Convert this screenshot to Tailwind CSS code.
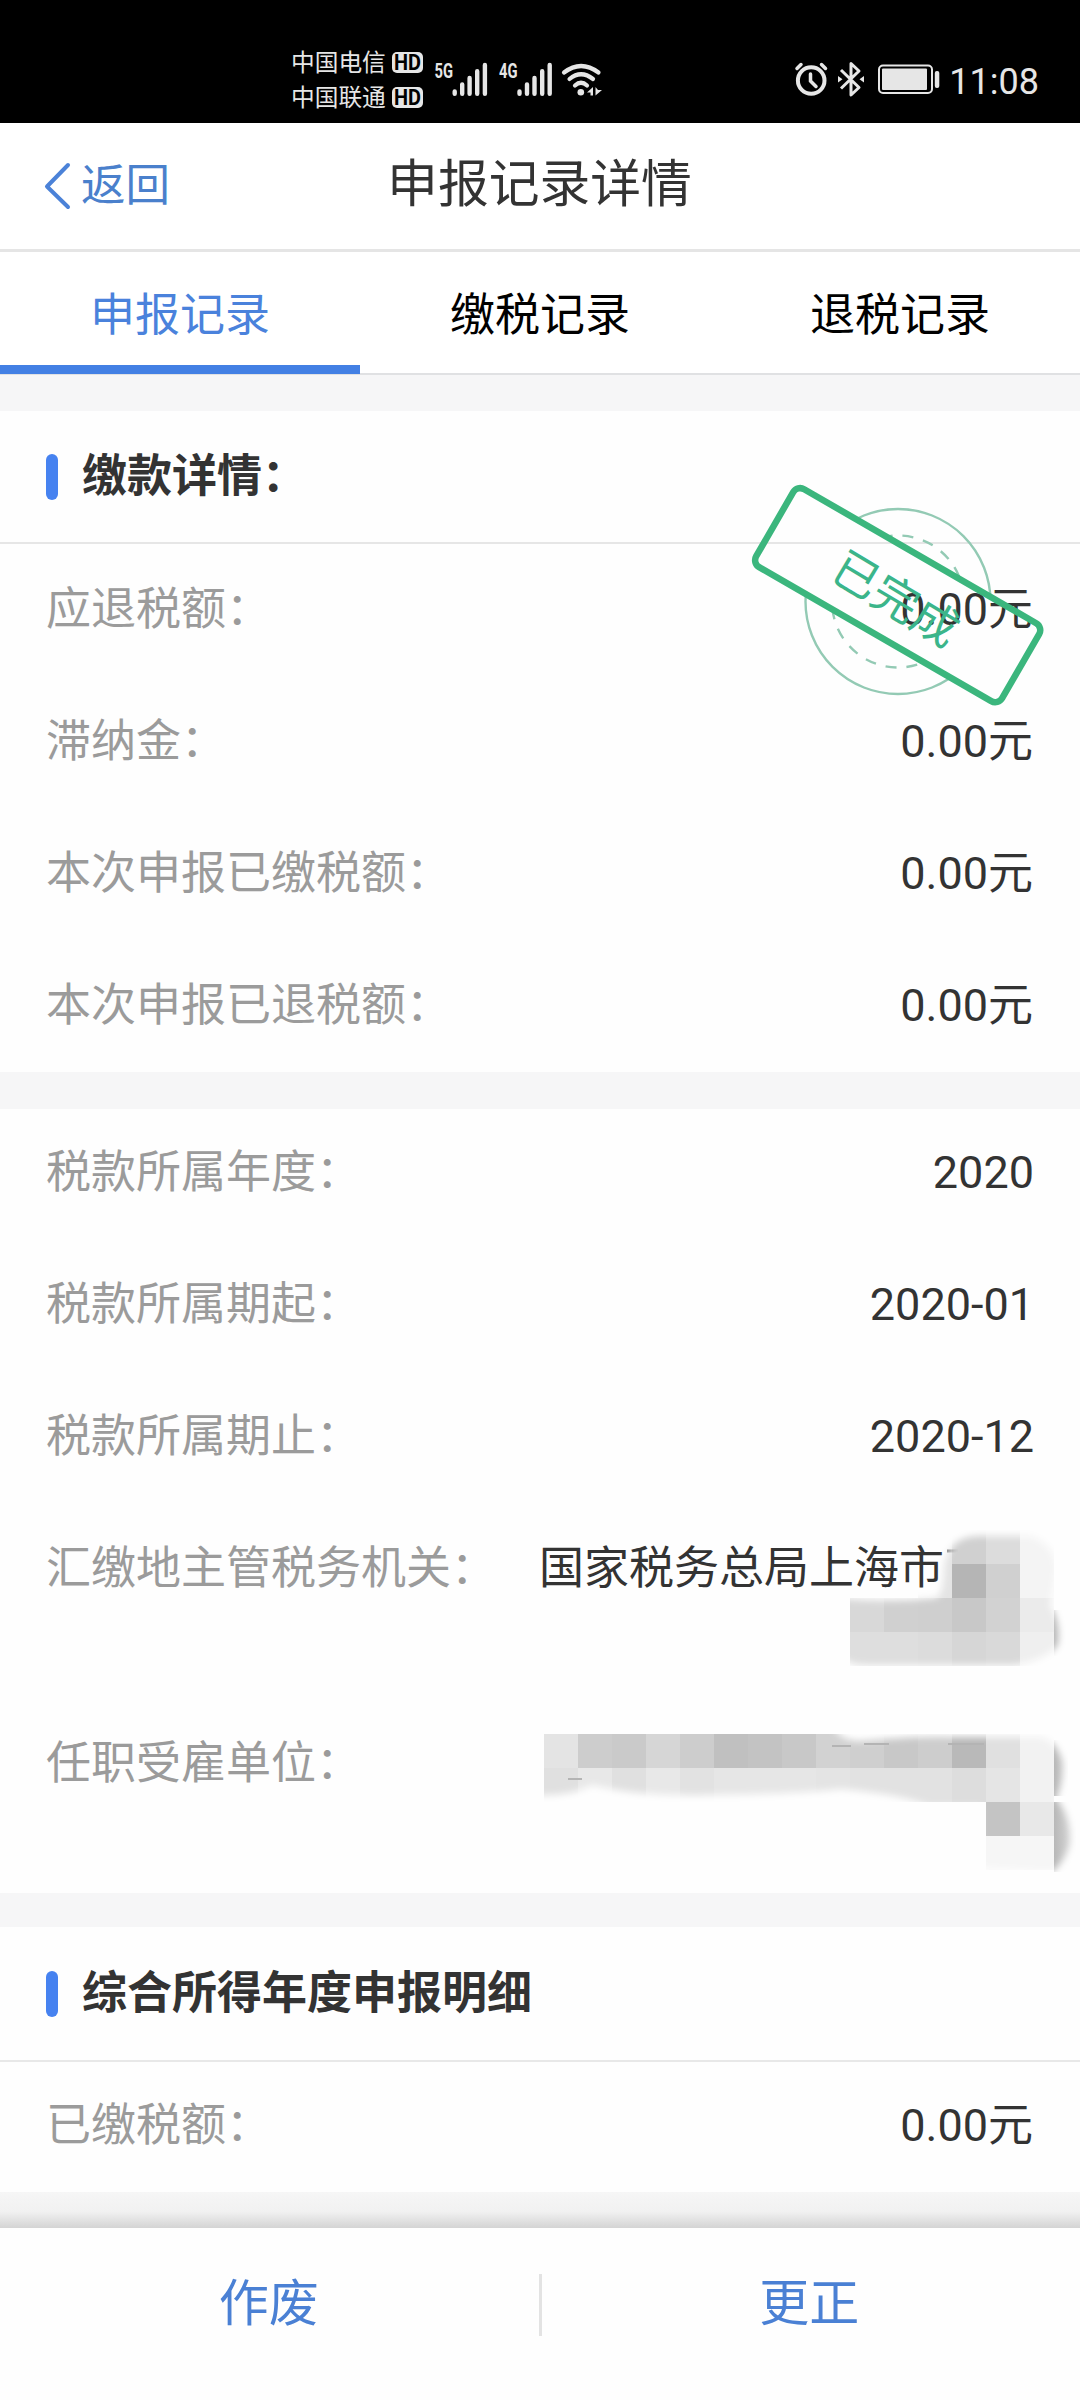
<!DOCTYPE html>
<html lang="zh-CN">
<head>
<meta charset="utf-8">
<title>申报记录详情</title>
<script src="https://cdn.jsdelivr.net/npm/@tailwindcss/browser@4"></script>
</head>
<body class="bg-[#f6f6f7]">
<div class="relative flex h-[2400px] w-[1080px] flex-col overflow-hidden font-[Roboto,'Noto_Sans_CJK_SC',sans-serif] text-[45px] leading-[60px] text-[#333]">

  <!-- status bar -->
  <header class="flex h-[123px] shrink-0 bg-black text-[#e6e6e6]">
    <div class="ml-[291px] mt-[46px] flex w-[101px] flex-col text-[23.7px] leading-[35px] whitespace-nowrap">
      <span>中国电信</span>
      <span>中国联通</span>
    </div>
    <svg class="h-[123px] w-[220px]" viewBox="392 0 220 123" fill="#e6e6e6">
      <rect x="392" y="52" width="31" height="21" rx="5"/>
      <rect x="392" y="87" width="31" height="21" rx="5"/>
      <g fill="#000" font-family="Roboto" font-weight="700" font-size="21.500">
        <text x="394" y="70.300" textLength="27" lengthAdjust="spacingAndGlyphs">HD</text>
        <text x="394" y="105.300" textLength="27" lengthAdjust="spacingAndGlyphs">HD</text>
      </g>
      <g font-family="Roboto" font-weight="700" font-size="20">
        <text x="434.500" y="77.500" textLength="18.500" lengthAdjust="spacingAndGlyphs">5G</text>
        <text x="499" y="77.500" textLength="18.500" lengthAdjust="spacingAndGlyphs">4G</text>
      </g>
      <g stroke="#e6e6e6" stroke-width="4.400" stroke-linecap="round">
        <path d="M454.700 91.500v2.300M462.200 84.500v9.300M469.600 78v15.800M477.200 71.200v22.600M484.900 65v28.800"/>
        <path d="M519.500 91.500v2.300M527 84.500v9.300M534.500 78v15.800M542.200 71.200v22.600M549.700 65v28.800"/>
      </g>
      <g fill="none" stroke="#e6e6e6" stroke-width="4.200" stroke-linecap="round">
        <path d="M564 72.500Q581 59.500 598.500 72.500M569.500 79Q581 69.500 593 79M575 85.500Q581 80 587 85.500"/>
      </g>
      <circle cx="580.800" cy="92.200" r="3.300"/>
      <path d="M593 87v8.500h-2.500v-3h-3.500zM595.500 95.500v-8.500l2.500 3h4z"/>
    </svg>
    <div class="ml-auto flex">
      <svg class="h-[123px] w-[117px]" viewBox="830 0 117 123" fill="none" stroke="#e6e6e6" overflow="visible">
        <g transform="translate(-1.500 -.5)">
        <g stroke-linecap="round" stroke-width="4">
          <circle cx="810.700" cy="81" r="13.300"/>
          <path stroke-width="3.500" d="M796.500 69l4-4M825 69l-4-4M810 74.500v7l5.500 5.500"/>
        </g>
        <path stroke-width="3" stroke-linejoin="round" d="M840.500 70.500l18 17.500-8 7.500v-31.500l8 7.500-18 17.500"/>
        <path fill="#e6e6e6" stroke="none" d="M837.500 76.500l4.500 3.300-4.500 3.300zM863.500 76.500l-4.500 3.300 4.500 3.300z"/>
        <rect x="878.500" y="66" width="53" height="27.500" rx="4" stroke-width="2"/>
        <rect x="881.500" y="69" width="45" height="21.500" rx="1" fill="#e6e6e6" stroke="none"/>
        <rect x="934.300" y="71.500" width="4.500" height="17" rx="2" fill="#e6e6e6" stroke="none"/>
        </g>
      </svg>
      <span class="mr-[41px] mt-[52px] text-[36px]">11:08</span>
    </div>
  </header>

  <!-- title bar -->
  <nav class="grid h-[129px] shrink-0 grid-cols-3 items-center border-b-3 border-[#e5e5e5] bg-white">
    <a class="flex items-center pl-[43px] text-[#4a80cc]">
      <svg class="mr-[8px] h-[50px] w-[30px]" viewBox="0 0 30 50" fill="none" stroke="#4b82d8" stroke-width="4" stroke-linecap="round" stroke-linejoin="round"><path d="M25 4L4 25.500L25 46"/></svg>
      <span class="text-[44.500px]">返回</span>
    </a>
    <h1 class="-mt-[2px] -ml-[1px] text-center text-[50.800px] whitespace-nowrap">申报记录详情</h1>
  </nav>

  <!-- tabs -->
  <div class="grid h-[123px] shrink-0 grid-cols-3 border-b-2 border-[#e0e1e3] bg-white text-center text-black">
    <div class="-mb-[1px] border-b-9 border-[#4380e4] pt-[34px] text-[#4a82dc]">申报记录</div>
    <div class="pt-[34px]">缴税记录</div>
    <div class="pt-[34px]">退税记录</div>
  </div>

  <!-- payment details -->
  <section class="mt-[36px] h-[661px] shrink-0 bg-[#fefefe]">
    <h2 class="flex h-[133px] items-center border-b-2 border-[#e6e6e6] pt-[1px] pl-[46px] font-bold"><i class="mr-[24px] h-[46px] w-[12px] rounded-full bg-[#4682f0]"></i>缴款详情：</h2>
    <dl class="flex flex-col gap-[72px] pt-[36px] pr-[47px] pl-[46px] [&>div]:flex [&>div]:justify-between [&_dt]:text-[#9b9b9b]">
      <div><dt>应退税额：</dt><dd>0.00元</dd></div>
      <div><dt>滞纳金：</dt><dd>0.00元</dd></div>
      <div><dt>本次申报已缴税额：</dt><dd>0.00元</dd></div>
      <div><dt>本次申报已退税额：</dt><dd>0.00元</dd></div>
    </dl>
  </section>

  <!-- tax period and authority -->
  <section class="mt-[37px] h-[784px] shrink-0 bg-[#fefefe]">
    <dl class="flex flex-col gap-[72px] pt-[34px] pr-[46px] pl-[46px] [&>div]:flex [&>div]:justify-between [&_dt]:text-[#9b9b9b]">
      <div><dt>税款所属年度：</dt><dd>2020</dd></div>
      <div><dt>税款所属期起：</dt><dd>2020-01</dd></div>
      <div><dt>税款所属期止：</dt><dd>2020-12</dd></div>
      <div class="h-[123px]"><dt>汇缴地主管税务机关：</dt><dd class="w-[495px]">国家税务总局上海市</dd></div>
      <div><dt>任职受雇单位：</dt><dd></dd></div>
    </dl>
  </section>

  <!-- annual declaration -->
  <section class="mt-[34px] h-[265px] shrink-0 bg-[#fefefe]">
    <h2 class="flex h-[135px] items-center border-b-2 border-[#e8e8e8] pl-[46px] font-bold"><i class="mr-[24px] h-[46px] w-[12px] rounded-full bg-[#4682f0]"></i>综合所得年度申报明细</h2>
    <dl class="flex justify-between pt-[34px] pr-[47px] pl-[46px]"><dt class="text-[#9b9b9b]">已缴税额：</dt><dd>0.00元</dd></dl>
  </section>

  <div class="h-[36px] shrink-0 bg-linear-to-b from-[#f6f6f6] via-[#f1f1f1] via-55% to-[#d4d4d4]"></div>

  <!-- actions -->
  <footer class="flex flex-1 justify-center bg-[#fefefe] pt-[46px] text-center text-[50px] text-[#4a80d4]">
    <span class="flex-1">作废</span>
    <i class="h-[62px] w-[3px] translate-x-[1px] bg-[#e3e3e3]"></i>
    <span class="flex-1 pr-[2px]">更正</span>
  </footer>

  <!-- completed stamp -->
  <svg class="absolute top-[470px] left-[740px] h-[250px] w-[320px]" viewBox="740 470 320 250" fill="none">
    <defs>
      <mask id="outside">
        <path fill="#fff" d="M740 470h320v250h-320z"/>
        <rect x="756" y="550" width="284" height="90" fill="#000" transform="rotate(30 898 595)"/>
      </mask>
    </defs>
    <g mask="url(#outside)" stroke="#93cab4" stroke-width="2.400">
      <circle cx="898" cy="601.500" r="92.500"/>
      <circle cx="898" cy="601.500" r="66" stroke-dasharray="11 10"/>
    </g>
    <rect x="756" y="550" width="284" height="90" rx="8" stroke="#3bb67d" stroke-width="6.500" transform="rotate(30 897.500 594.500)"/>
    <text x="896" y="616" text-anchor="middle" font-family="'Noto Sans CJK SC'" font-size="46" fill="#3bb58a" transform="rotate(31 897 599)">已完成</text>
  </svg>

  <!-- redaction mosaics -->
  <svg id="mosaic" class="absolute top-[1520px] left-[530px] h-[370px] w-[550px]" viewBox="530 1520 550 370">
    <defs>
      <filter id="soft" x="-10%" y="-10%" width="120%" height="120%"><feGaussianBlur stdDeviation="3.500"/></filter>
      <mask id="brush" maskUnits="userSpaceOnUse" x="530" y="1520" width="550" height="370">
        <g fill="#fff" filter="url(#soft)">
          <path d="M944 1567Q948 1537 978 1536H1030Q1056 1545 1056 1570Q1053 1592 1050 1605Q1062 1625 1058 1645Q1045 1660 1015 1665H870Q850 1666 838 1655V1598Q890 1603 935 1598Q943 1598 944 1567z"/>
          <path d="M530 1725H832Q840 1741 860 1741Q920 1736 950 1737H1040Q1056 1740 1063 1762Q1064 1785 1056 1798Q1073 1818 1070 1845Q1065 1862 1052 1872L980 1868V1806H930Q900 1794 840 1789Q800 1794 710 1795Q640 1797 592 1785Q570 1797 530 1795z"/>
        </g>
      </mask>
      <linearGradient id="edge"><stop offset="0" stop-color="#b8b8b8"/><stop offset="1" stop-color="#dedede"/></linearGradient>
    </defs>
    <path d="M947 1551h11" stroke="#777" stroke-width="3"/>
    <g mask="url(#brush)">
      <g id="cells" shape-rendering="crispEdges"></g>
      <path fill="url(#edge)" d="M1054 1610h12v46h-12zM1054 1740h14v56h-14zM1054 1802h22v70h-22z"/>
    </g>
    <path d="M832 1746h19M864 1744h25M948 1744h36M568 1779h14" stroke="#b4b4b4" stroke-width="2"/>
  </svg>
</div>
<script>
  // rows of grey cells: [top, first column x, brightness values]
  const rows = [
    [1530, 918, [0xe4, 0xd0, 0xdc, 0xf4]],
    [1564, 918, [0xe4, 0xb5, 0xd0, 0xf4]],
    [1598, 850, [0xd8, 0xd0, 0xcf, 0xc8, 0xd2, 0xeb]],
    [1632, 850, [0xde, 0xde, 0xdc, 0xd6, 0xd9, 0xef]],
    [1734, 544, [0xe4, 0xcd, 0xca, 0xd6, 0xcd, 0xc0, 0xc3, 0xc8, 0xd2, 0xcf, 0xc8, 0xcd, 0xb9, 0xe0, 0xf2]],
    [1768, 544, [0xe0, 0xe8, 0xe0, 0xe8, 0xe2, 0xe6, 0xe6, 0xe6, 0xe4, 0xe2, 0xe2, 0xe2, 0xdd, 0xe5, 0xf2]],
    [1802, 986, [0xc4, 0xe8]],
    [1836, 986, [0xf6, 0xf6]]
  ];
  const cells = document.getElementById('cells');
  for (const [y, x, values] of rows) {
    values.forEach((v, i) => {
      const r = document.createElementNS('http://www.w3.org/2000/svg', 'rect');
      r.setAttribute('x', x + i * 34);
      r.setAttribute('y', y);
      r.setAttribute('width', 34);
      r.setAttribute('height', 34);
      r.setAttribute('fill', `rgb(${v},${v},${v})`);
      cells.appendChild(r);
    });
  }
</script>
</body>
</html>
